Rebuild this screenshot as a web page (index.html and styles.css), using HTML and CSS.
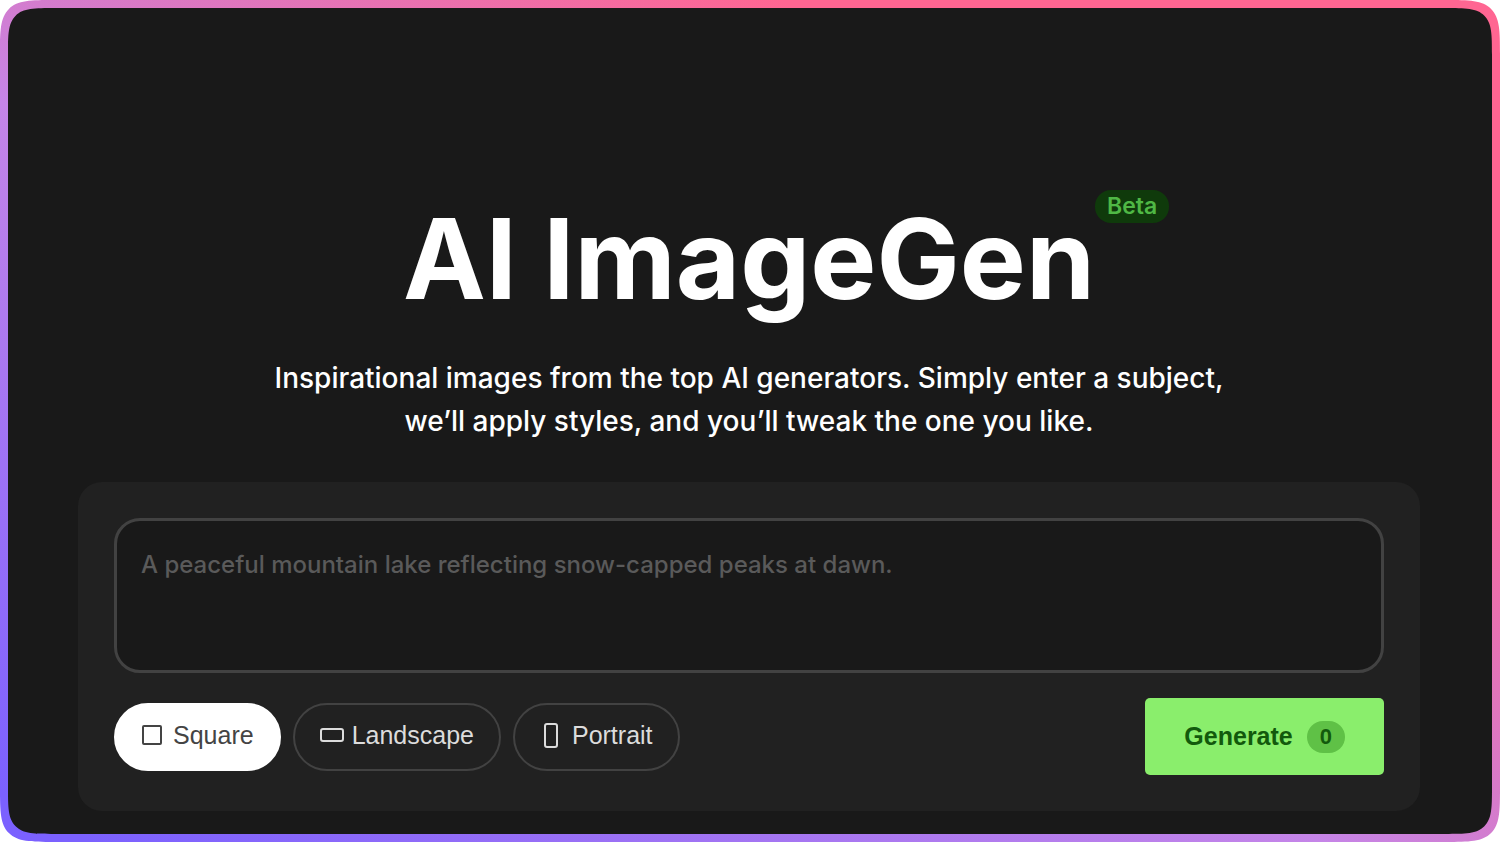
FILE: index.html
```html
<!DOCTYPE html>
<html lang="en">
<head>
    <meta charset="UTF-8">
    <meta name="viewport" content="width=device-width, initial-scale=1.0">
    <title>AI ImageGen</title>
    <link rel="stylesheet" href="styles.css">
</head>
<body>

    <div class="frame">
        <main class="screen">
            <header class="hero">
                <h1 class="title">AI ImageGen<span class="beta">Beta</span></h1>
                <p class="subtitle">Inspirational images from the top AI generators. Simply enter a subject, we’ll apply styles, and you’ll tweak the one you like.</p>
            </header>

            <form class="panel">
                <textarea class="prompt" aria-label="Image description" placeholder="A peaceful mountain lake reflecting snow-capped peaks at dawn."></textarea>

                <div class="row">
                    <div class="formats" role="radiogroup" aria-label="Format">
                        <label class="pill">
                            <input type="radio" name="format" value="square" checked>
                            <svg class="icon" viewBox="0 0 24 26"><rect x="2" y="3" width="18" height="18" rx="1"/></svg>
                            Square
                        </label>
                        <label class="pill">
                            <input type="radio" name="format" value="landscape">
                            <svg class="icon" viewBox="0 0 24 26"><rect x="1" y="6" width="22" height="12" rx="2"/></svg>
                            Landscape
                        </label>
                        <label class="pill">
                            <input type="radio" name="format" value="portrait">
                            <svg class="icon" viewBox="0 0 24 26"><rect x="5" y="1" width="12" height="23" rx="2"/></svg>
                            Portrait
                        </label>
                    </div>
                    <button type="button" class="generate">Generate <span class="count">0</span></button>
                </div>
            </form>
        </main>
    </div>

</body>
</html>
```
FILE: styles.css
```css
* {
    box-sizing: border-box;
}

body {
    margin: 0;
    background-color: #fff;
    color: #fff;
    font-family: "Liberation Sans", Arial, sans-serif;
}

.frame {
    min-height: 100vh;
    padding: 8px;
    display: flex;
    border-radius: 40px;
    background: linear-gradient(to top right, #7b61ff 3%, #c585e8 44%, #d27dd0 50%, #ff6692 76%);
}

.screen {
    flex: 1;
    padding: 186px 72px 22px 70px;
    border-radius: 32px;
    background-color: #191919;
}

@supports (corner-shape: squircle) {
    .frame {
        border-radius: 56px;
        corner-shape: squircle;
    }

    .screen {
        border-radius: 48px;
        corner-shape: squircle;
    }
}

.hero {
    text-align: center;
}

.title {
    position: relative;
    width: fit-content;
    margin: 0 auto 33px;
    font-family: Inter, sans-serif;
    font-size: 111px;
    line-height: 130px;
    font-weight: 700;
}

.beta {
    position: absolute;
    left: 100%;
    top: -4px;
    padding: 0 12px;
    border-radius: 16px;
    background-color: #0f3a0b;
    color: #4fb845;
    font-size: 23px;
    line-height: 33px;
    font-weight: 600;
}

.subtitle {
    max-width: 970px;
    margin: 0 auto 39px;
    font-family: Inter, sans-serif;
    font-size: 28px;
    line-height: 43px;
    font-weight: 500;
}

.panel {
    padding: 36px;
    border-radius: 24px;
    background-color: #212121;
}

.prompt {
    display: block;
    width: 100%;
    height: 155px;
    margin-bottom: 25px;
    padding: 28px 24px;
    border: 3px solid #424242;
    border-radius: 26px;
    outline: none;
    resize: none;
    background-color: #191919;
    color: #fff;
    font-family: Inter, sans-serif;
    font-size: 24px;
    line-height: 32px;
    font-weight: 500;
}

.prompt::placeholder {
    color: #5a5a5a;
    opacity: 1;
}

.row {
    display: flex;
    justify-content: space-between;
    align-items: center;
}

.formats {
    display: flex;
    gap: 12px;
}

.pill {
    position: relative;
    display: flex;
    align-items: center;
    gap: 8px;
    height: 68px;
    padding: 0 25px 2px;
    border: 2px solid #424242;
    border-radius: 34px;
    color: #dcdcdc;
    font-size: 25px;
    cursor: pointer;
}

.pill input {
    position: absolute;
    inset: 0;
    margin: 0;
    opacity: 0;
    cursor: pointer;
}

.pill:has(input:checked) {
    border-color: #fff;
    background-color: #fff;
    color: #444;
}

.icon {
    width: 24px;
    height: 26px;
    fill: none;
    stroke: currentColor;
    stroke-width: 2;
}

.generate {
    display: flex;
    align-items: center;
    gap: 14px;
    height: 77px;
    padding: 0 39px;
    border: none;
    border-radius: 5px;
    background-color: #8aee6c;
    color: #125a0c;
    font-family: inherit;
    font-size: 25px;
    font-weight: bold;
    cursor: pointer;
}

.count {
    padding: 0 13px;
    border-radius: 16px;
    background-color: #5fc146;
    font-size: 22px;
    line-height: 32px;
}
```
